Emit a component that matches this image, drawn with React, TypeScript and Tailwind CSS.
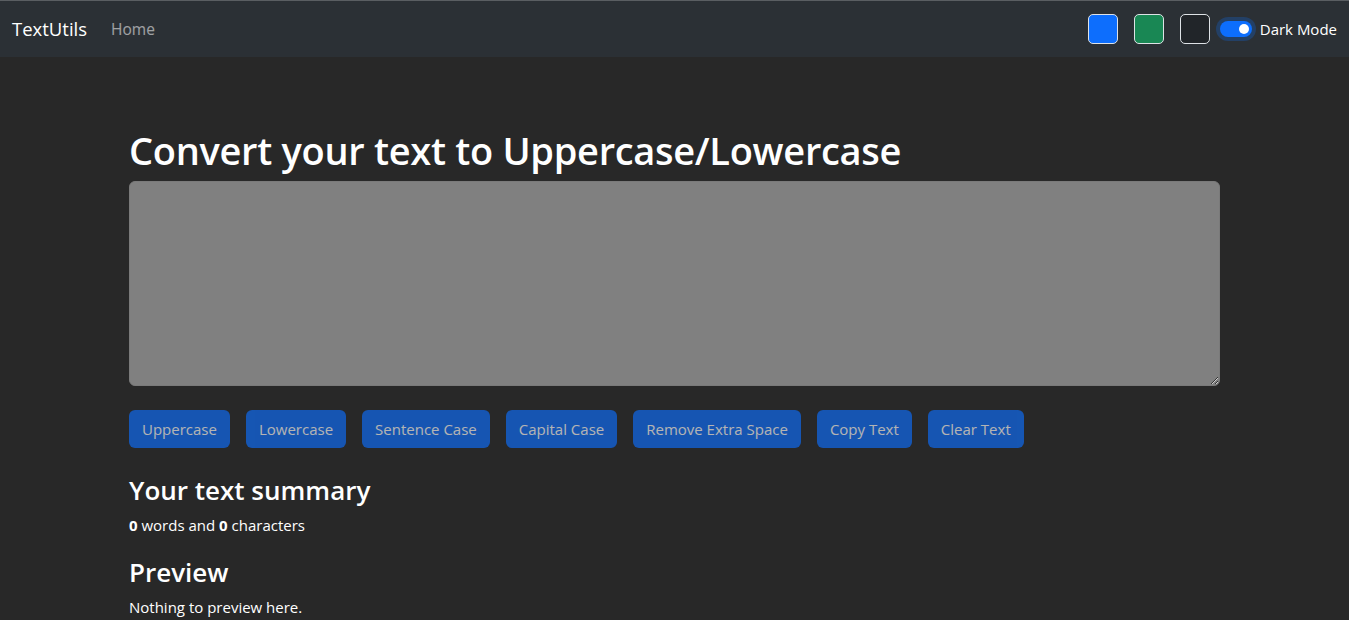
import { useState } from 'react';

const actions = [
  'Uppercase',
  'Lowercase',
  'Sentence Case',
  'Capital Case',
  'Remove Extra Space',
  'Copy Text',
  'Clear Text',
];

export default function App() {
  const [text, setText] = useState('');
  const words = text.split(/\s+/).filter((w) => w.length > 0).length;

  return (
    <div className="min-h-screen bg-[#282828] text-white font-['Open_Sans',sans-serif]">
      {/* NAVBAR */}
      <nav className="h-[57px] bg-[#2b3035] border-t border-[#5a5e62] flex items-center justify-between px-3">
        <div className="flex items-center">
          <span className="text-[18.5px] mr-[24px]">TextUtils</span>
          <span className="text-[15.5px] text-white/55 pt-[2px]">Home</span>
        </div>
        <div className="flex items-center">
          <div className="w-[30px] h-[30px] rounded-[5px] border border-[#dee2e6] bg-[#0d6efd] mr-4" />
          <div className="w-[30px] h-[30px] rounded-[5px] border border-[#dee2e6] bg-[#198754] mr-4" />
          <div className="w-[30px] h-[30px] rounded-[5px] border border-[#dee2e6] bg-[#212529] mr-[10px]" />
          <div className="w-8 h-4 rounded-full bg-[#0d6efd] ring-4 ring-[#0d6efd]/25 flex items-center justify-end pr-[3px] mr-[8px]">
            <div className="w-[10px] h-[10px] rounded-full bg-white" />
          </div>
          <span className="text-[15px]">Dark Mode</span>
        </div>
      </nav>

      {/* MAIN */}
      <div className="mx-auto w-[1091px] pt-[69px]">
        <h1 className="text-[38px] tracking-[-0.3px] font-semibold leading-[48px] mb-[7px]">
          Convert your text to Uppercase/Lowercase
        </h1>
        <textarea
          value={text}
          onChange={(e) => setText(e.target.value)}
          className="block w-full h-[205px] rounded-[6px] bg-[#808080] border border-[#7a7a7a] text-white px-3 py-2 outline-none"
        />
        <div className="flex gap-4 mt-[24px]">
          {actions.map((a) => (
            <button
              key={a}
              disabled={text.length === 0}
              className="h-[38px] px-[13px] rounded-[6px] bg-[#0d6efd] text-white opacity-65 text-[15px]"
            >
              {a}
            </button>
          ))}
        </div>

        <h2 className="text-[26px] font-semibold leading-[34px] mt-[25px] mb-[7px]">Your text summary</h2>
        <p className="text-[15px]">
          <b>{words}</b> words and <b>{text.length}</b> characters
        </p>
        <h2 className="text-[26px] font-semibold leading-[34px] mt-[18px] mb-[7px]">Preview</h2>
        <p className="text-[15px]">{text.length > 0 ? text : 'Nothing to preview here.'}</p>
      </div>
    </div>
  );
}
